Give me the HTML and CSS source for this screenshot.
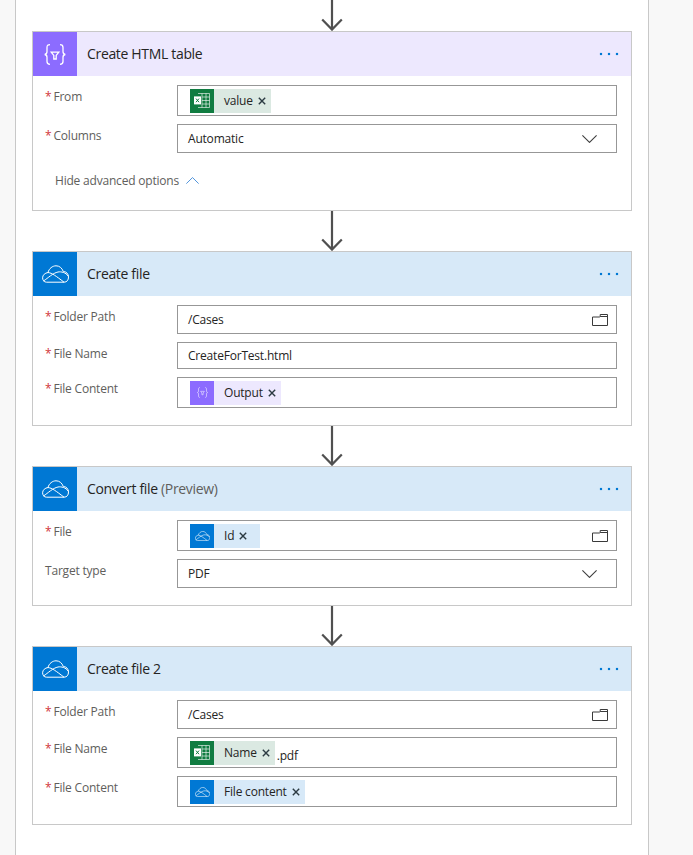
FILE: index.html
```html
<!DOCTYPE html>
<html lang="en">
  <head>
    <meta charset="utf-8" />
    <title>Flow editor</title>
    <link rel="stylesheet" href="styles.css">
  </head>
  <body>
    <svg class="defs" aria-hidden="true">
      <symbol id="i-cloud" viewBox="0 0 27 18">
        <path d="M4.5 17.2C2 17.2 .6 15 .6 12.8C.6 10 3 8 6 7.5C7 3.5 10.5 .8 14 .8C17.5 .8 20 3 21.3 6.5C24.5 6.5 26.5 9 26.5 12C26.5 15 25 17.2 22 17.2Z" fill="none" stroke="currentColor"/>
        <path d="M6 7.5C10 8 14 11 22 17.2M1.5 16C6 13 11 8 16 7C19 6.4 24 7.5 26 11" fill="none" stroke="currentColor"/>
      </symbol>
      <symbol id="i-braces" viewBox="0 0 22 21">
        <path d="M6 .7C3.6 .7 3 1.6 3 3.4V7.8C3 9.4 2.2 10.2 .7 10.5C2.2 10.8 3 11.6 3 13.2V17.6C3 19.4 3.6 20.3 6 20.3M16 .7C18.4 .7 19 1.6 19 3.4V7.8C19 9.4 19.8 10.2 21.3 10.5C19.8 10.8 19 11.6 19 13.2V17.6C19 19.4 18.4 20.3 16 20.3" fill="none" stroke="currentColor" stroke-width="1.3"/>
        <path d="M7.2 8.2H14.8L12.2 11.4V15H9.8V11.4Z" fill="none" stroke="currentColor" stroke-width="1.3"/>
      </symbol>
      <symbol id="i-excel" viewBox="0 0 16 15">
        <path d="M4 .5H15.5V14.5H4M8 .5V14.5M12 .5V14.5M8 4H15.5M8 7.5H15.5M8 11H15.5" fill="none" stroke="#fff" stroke-opacity=".6"/>
        <rect x="0" y="3.4" width="7" height="8" fill="#fff"/>
        <path d="M2 5.6L5 9.2M5 5.6L2 9.2" fill="none" stroke="#107c41"/>
      </symbol>
      <symbol id="i-close" viewBox="0 0 8 8">
        <path d="M.8 .8L7.2 7.2M7.2 .8L.8 7.2" fill="none" stroke="currentColor" stroke-width="1.4"/>
      </symbol>
      <symbol id="i-folder" viewBox="0 0 16 12">
        <path d="M.5 3H7.8L8.2 2.5V.5H15.5V11.5H.5ZM8.2 2.5H15.5" fill="none" stroke="currentColor"/>
      </symbol>
      <symbol id="i-chevron" viewBox="0 0 15 8">
        <path d="M.4 .4L7.5 7.4L14.6 .4" fill="none" stroke="currentColor" stroke-width="1.1"/>
      </symbol>
      <symbol id="i-arrow" viewBox="0 0 22 40">
        <path d="M11 0V39M1.2 28.6L11 38.6L20.8 28.6" fill="none" stroke="currentColor" stroke-width="2.2"/>
      </symbol>
    </svg>

    <div class="canvas">
      <div class="connector connector-first"><svg><use href="#i-arrow"/></svg></div>

      <section class="card card-purple">
        <header class="card-head">
          <span class="card-icon"><svg class="icon-braces"><use href="#i-braces"/></svg></span>
          <h2>Create HTML table</h2>
          <span class="dots"><i></i><i></i><i></i></span>
        </header>
        <div class="card-body">
          <div class="field">
            <label><b>*</b>From</label>
            <div class="input input-tokens">
              <span class="chip chip-green"><span class="chip-icon"><svg class="icon-excel"><use href="#i-excel"/></svg></span><span class="chip-text">value</span><svg class="chip-close"><use href="#i-close"/></svg></span>
            </div>
          </div>
          <div class="field">
            <label><b>*</b>Columns</label>
            <div class="input">Automatic<svg class="chevron"><use href="#i-chevron"/></svg></div>
          </div>
          <div class="advanced">Hide advanced options<svg class="chevron-up"><use href="#i-chevron"/></svg></div>
        </div>
      </section>

      <div class="connector"><svg><use href="#i-arrow"/></svg></div>

      <section class="card card-blue">
        <header class="card-head">
          <span class="card-icon"><svg class="icon-cloud"><use href="#i-cloud"/></svg></span>
          <h2>Create file</h2>
          <span class="dots"><i></i><i></i><i></i></span>
        </header>
        <div class="card-body">
          <div class="field">
            <label><b>*</b>Folder Path</label>
            <div class="input">/Cases<svg class="folder"><use href="#i-folder"/></svg></div>
          </div>
          <div class="field">
            <label><b>*</b>File Name</label>
            <div class="input input-short">CreateForTest.html</div>
          </div>
          <div class="field">
            <label><b>*</b>File Content</label>
            <div class="input input-tokens">
              <span class="chip chip-purple"><span class="chip-icon"><svg class="icon-braces-sm"><use href="#i-braces"/></svg></span><span class="chip-text">Output</span><svg class="chip-close"><use href="#i-close"/></svg></span>
            </div>
          </div>
        </div>
      </section>

      <div class="connector"><svg><use href="#i-arrow"/></svg></div>

      <section class="card card-blue">
        <header class="card-head">
          <span class="card-icon"><svg class="icon-cloud"><use href="#i-cloud"/></svg></span>
          <h2>Convert file <span class="muted">(Preview)</span></h2>
          <span class="dots"><i></i><i></i><i></i></span>
        </header>
        <div class="card-body">
          <div class="field">
            <label><b>*</b>File</label>
            <div class="input input-tokens">
              <span class="chip chip-blue"><span class="chip-icon"><svg class="icon-cloud-sm"><use href="#i-cloud"/></svg></span><span class="chip-text">Id</span><svg class="chip-close"><use href="#i-close"/></svg></span>
              <svg class="folder"><use href="#i-folder"/></svg>
            </div>
          </div>
          <div class="field">
            <label>Target type</label>
            <div class="input">PDF<svg class="chevron"><use href="#i-chevron"/></svg></div>
          </div>
        </div>
      </section>

      <div class="connector"><svg><use href="#i-arrow"/></svg></div>

      <section class="card card-blue">
        <header class="card-head">
          <span class="card-icon"><svg class="icon-cloud"><use href="#i-cloud"/></svg></span>
          <h2>Create file 2</h2>
          <span class="dots"><i></i><i></i><i></i></span>
        </header>
        <div class="card-body">
          <div class="field">
            <label><b>*</b>Folder Path</label>
            <div class="input">/Cases<svg class="folder"><use href="#i-folder"/></svg></div>
          </div>
          <div class="field">
            <label><b>*</b>File Name</label>
            <div class="input input-tokens">
              <span class="chip chip-green"><span class="chip-icon"><svg class="icon-excel"><use href="#i-excel"/></svg></span><span class="chip-text">Name</span><svg class="chip-close"><use href="#i-close"/></svg></span>
              <span class="after-chip">.pdf</span>
            </div>
          </div>
          <div class="field">
            <label><b>*</b>File Content</label>
            <div class="input input-tokens">
              <span class="chip chip-blue"><span class="chip-icon"><svg class="icon-cloud-sm"><use href="#i-cloud"/></svg></span><span class="chip-text">File content</span><svg class="chip-close"><use href="#i-close"/></svg></span>
            </div>
          </div>
        </div>
      </section>
    </div>
  </body>
</html>
```

FILE: styles.css
```css
* { box-sizing: border-box; }

html, body { height: 100%; }

body {
    margin: 0;
    overflow: hidden;
    background-color: #f8f8f8;
    font-family: "Open Sans", "Noto Sans", sans-serif;
    font-size: 12px;
    color: #252423;
}

.defs { display: none; }

.canvas {
    width: 634px;
    height: 100%;
    margin-left: 15px;
    padding: 0 16px;
    background-color: #fff;
    border-left: 1px solid #c8c8c8;
    border-right: 1px solid #c8c8c8;
}

.connector {
    display: flex;
    justify-content: center;
    align-items: flex-end;
    width: 600px;
    height: 40px;
    color: #505050;
}
.connector svg { display: block; flex: none; width: 22px; height: 40px; }
.connector-first { height: 31px; }

.card {
    width: 600px;
    border: 1px solid #c8c8c8;
}

.card-head {
    display: flex;
    align-items: center;
    height: 44px;
    padding-right: 13px;
}
.card-purple .card-head { background-color: #ede8fe; }
.card-blue .card-head { background-color: #d7e9f8; }

.card-icon {
    display: flex;
    align-items: center;
    justify-content: center;
    width: 44px;
    height: 44px;
    color: #fff;
}
.card-purple .card-icon { background-color: #8c6cff; }
.card-blue .card-icon { background-color: #0078d4; }

.icon-cloud { width: 27px; height: 18px; }
.icon-braces { width: 22px; height: 21px; }

.card-head h2 {
    flex: 1;
    margin: 0 0 0 10px;
    padding-bottom: 1px;
    font-size: 14px;
    font-weight: 400;
    letter-spacing: -.33px;
}
.muted { color: #605e5c; }

.dots { display: flex; gap: 6px; }
.dots i {
    display: block;
    width: 2px;
    height: 2px;
    background-color: #0078d4;
    box-shadow: 0 0 1px #0078d4;
}

.card-body {
    display: flex;
    flex-direction: column;
    gap: 8px;
    padding: 9px 14px 17px 12px;
}

.field {
    display: grid;
    grid-template-columns: 132px 440px;
}

.field label {
    padding-top: 4px;
    line-height: 16px;
    color: #605e5c;
    letter-spacing: -.2px;
}
.field label b {
    margin-right: 2px;
    font-weight: 400;
    color: #d13438;
}

.input {
    display: flex;
    align-items: center;
    justify-content: space-between;
    height: 29px;
    padding: 0 8px 0 10px;
    border: 1px solid #979797;
    letter-spacing: -.2px;
}
.input-short { height: 27px; }
.input-tokens {
    justify-content: flex-start;
    height: 31px;
    padding: 1px 8px 1px 12px;
}

.chip {
    display: flex;
    align-items: center;
    min-width: 70px;
    height: 24px;
    padding-right: 5px;
}
.chip-green { background-color: #dbe9e2; }
.chip-blue { background-color: #d7e9f8; }
.chip-purple { background-color: #ede8fe; }

.chip-icon {
    display: flex;
    align-items: center;
    justify-content: center;
    width: 24px;
    height: 24px;
    margin-right: 10px;
    color: #fff;
}
.chip-green .chip-icon { background-color: #107c41; }
.chip-blue .chip-icon { background-color: #0078d4; }
.chip-purple .chip-icon { background-color: #8c6cff; }

.chip-text { padding-bottom: 1px; }

.icon-excel { width: 16px; height: 15px; }
.icon-cloud-sm { width: 15px; height: 10px; }
.icon-braces-sm { width: 11px; height: 11px; opacity: .8; }

.chip-close {
    width: 8px;
    height: 8px;
    margin-left: 5px;
    color: #2b3a42;
}

.after-chip { margin: 5px 0 0 2px; }

.folder { width: 16px; height: 12px; color: #3a3a3a; }
.input-tokens .folder { margin-left: auto; }

.chevron {
    width: 15px;
    height: 8px;
    margin-right: 11px;
    color: #3f3f3f;
}

.advanced {
    display: flex;
    align-items: center;
    height: 20px;
    margin: 10px 0 2px 10px;
    padding-bottom: 1px;
    color: #605e5c;
    letter-spacing: -.2px;
}
.chevron-up {
    width: 13px;
    height: 7px;
    margin-left: 7px;
    color: #4a90d9;
    transform: rotate(180deg);
}
```
